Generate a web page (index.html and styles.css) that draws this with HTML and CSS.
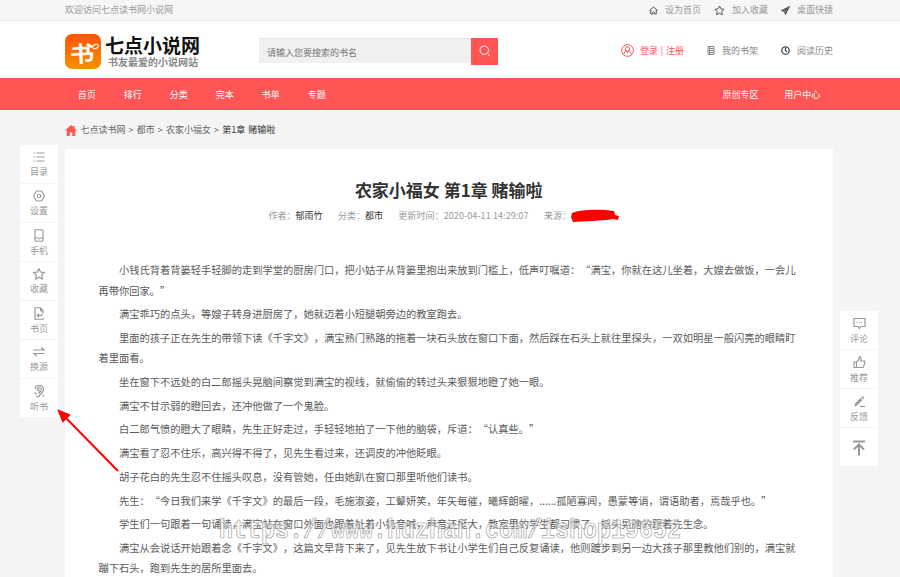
FILE: index.html
```html
<!DOCTYPE html>
<html lang="zh-CN">
<head>
<meta charset="UTF-8">
<title>农家小福女 第1章 赌输啦 - 七点读书网</title>
<link rel="stylesheet" href="styles.css">
</head>
<body>
<div class="topbar">
  <div class="wrap">
    <span>欢迎访问七点读书网小说网</span>
    <ul class="top-links">
      <li><svg width="9" height="9" viewBox="0 0 18 18"><path d="M1 9l8-7 8 7M3.500 8v8h4v-3a1.500 1.500 0 0 1 3 0v3h4V8"/></svg>设为首页</li>
      <li class="star"><svg width="11" height="11" viewBox="0 0 22 22"><path d="M11 2l2.900 5.700 6.100 1-4.400 4.400 1 6.400-5.600-2.900-5.600 2.900 1-6.400L2 8.700l6.100-1z"/></svg>加入收藏</li>
      <li class="send"><svg width="9" height="9" viewBox="0 0 18 18"><path d="M16 2L2 9l5 2 2 5zM7 11l9-9"/></svg>桌面快捷</li>
    </ul>
  </div>
</div>

<div class="header">
  <div class="wrap">
    <a class="logo">
      <span class="logo-mark"><b>书</b><i></i></span>
      <span class="logo-text"><strong>七点小说网</strong><em>书友最爱的小说网站</em></span>
    </a>
    <div class="search">
      <div class="search-input">请输入您要搜索的书名</div>
      <div class="search-btn"><svg width="12" height="12" viewBox="0 0 24 24"><circle cx="10.500" cy="10.500" r="8.500"/><path d="M17 17l5 5"/></svg></div>
    </div>
    <ul class="user-links">
      <li class="login"><svg width="13" height="13" viewBox="0 0 26 26"><circle cx="13" cy="13" r="11.800"/><circle cx="13" cy="10" r="4.500"/><path d="M5.500 21c.5-4 3-6 5-7l2.500 3 2.500-3c2 1 4.500 3 5 7"/></svg>登录 | 注册</li>
      <li class="shelf"><svg width="8" height="9" viewBox="0 0 16 18"><path d="M2 1h12v16H2zM5 1v16M5 5h9M5 9h9M5 13h9"/></svg>我的书架</li>
      <li class="history"><svg width="9" height="9" viewBox="0 0 18 18"><circle cx="9" cy="9" r="7.500"/><path d="M9 4v5l3 3"/></svg>阅读历史</li>
    </ul>
  </div>
</div>

<div class="nav">
  <div class="wrap">
    <ul class="nav-main">
      <li>首页</li><li>排行</li><li>分类</li><li>完本</li><li>书单</li><li>专题</li>
    </ul>
    <ul class="nav-user">
      <li>原创专区</li><li>用户中心</li>
    </ul>
  </div>
</div>

<div class="wrap crumbs">
  <svg width="12" height="11" viewBox="0 0 24 22"><path d="M12 0L0 11h3.500v11h6v-7h5v7h6V11H24L19 6.300V2h-3v1.700z"/></svg>
  <p>七点读书网 &gt; 都市 &gt; 农家小福女 &gt; <b>第1章 赌输啦</b></p>
</div>

<div class="wrap reader">
  <h1>农家小福女 第1章 赌输啦</h1>
  <div class="meta">
    <span>作者：<b>郁雨竹</b></span>
    <span>分类：<b>都市</b></span>
    <span class="date">更新时间：2020-04-11 14:29:07</span>
    <span>来源：<svg width="48" height="14" viewBox="0 0 48 14"><path d="M1 4C10 0 30 0 43 2l1 4 4 1-1 4-5-1C32 12 12 12 2 13L0 8z"/></svg></span>
  </div>
  <div class="content">
    <p>小钱氏背着背篓轻手轻脚的走到学堂的厨房门口，把小姑子从背篓里抱出来放到门槛上，低声叮嘱道：“满宝，你就在这儿坐着，大嫂去做饭，一会儿再带你回家。”</p>
    <p>满宝乖巧的点头，等嫂子转身进厨房了，她就迈着小短腿朝旁边的教室跑去。</p>
    <p>里面的孩子正在先生的带领下读《千字文》，满宝熟门熟路的拖着一块石头放在窗口下面，然后踩在石头上就往里探头，一双如明星一般闪亮的眼睛盯着里面看。</p>
    <p>坐在窗下不远处的白二郎摇头晃脑间察觉到满宝的视线，就偷偷的转过头来狠狠地瞪了她一眼。</p>
    <p>满宝不甘示弱的瞪回去，还冲他做了一个鬼脸。</p>
    <p>白二郎气愤的瞪大了眼睛，先生正好走过，手轻轻地拍了一下他的脑袋，斥道：“认真些。”</p>
    <p>满宝看了忍不住乐，高兴得不得了，见先生看过来，还调皮的冲他眨眼。</p>
    <p>胡子花白的先生忍不住摇头叹息，没有管她，任由她趴在窗口那里听他们读书。</p>
    <p>先生：“今日我们来学《千字文》的最后一段，毛施淑姿，工颦妍笑，年矢每催，曦辉朗曜，......孤陋寡闻，愚蒙等诮，谓语助者，焉哉乎也。”</p>
    <p>学生们一句跟着一句诵读，满宝站在窗口外面也跟着扯着小奶音喊，声音还挺大，教室里的学生都习惯了，摇头晃脑的跟着先生念。</p>
    <p>满宝从会说话开始跟着念《千字文》，这篇文早背下来了，见先生放下书让小学生们自己反复诵读，他则踱步到另一边大孩子那里教他们别的，满宝就蹦下石头，跑到先生的居所里面去。</p>
  </div>
</div>

<ul class="side side-left">
  <li><svg width="12" height="12" viewBox="0 0 24 24"><path d="M1 4h3M7 4h16M1 12h3M7 12h16M1 20h3M7 20h16"/></svg>目录</li>
  <li><svg width="12" height="12" viewBox="0 0 24 24"><path d="M7 2h10l6 10-6 10H7L1 12z"/><circle cx="12" cy="12" r="3.500"/></svg>设置</li>
  <li><svg width="12" height="13" viewBox="0 0 24 26"><rect x="4" y="1.500" width="16" height="23" rx="2"/><path d="M4 18h16M11 21.500h2"/></svg>手机</li>
  <li><svg width="12" height="12" viewBox="0 0 24 24"><path d="M12 1.500l3.300 6.600 7.200 1.100-5.100 5.300 1.200 7.500-6.600-3.500L5.400 22l1.200-7.500-5.100-5.300 7.200-1.100z"/></svg>收藏</li>
  <li><svg width="12" height="13" viewBox="0 0 24 26"><path d="M20 12V7l-5-5.500H4v23h16v-3M15 2v6h5M18 13v4H9M12 13.500L8.500 17l3.500 3.500"/></svg>书页</li>
  <li><svg width="12" height="12" viewBox="0 0 24 24"><path d="M1 8h21l-6-5M23 15H2l6 5"/></svg>换源</li>
  <li><svg width="12" height="13" viewBox="0 0 24 26"><path d="M4 8c1-9 17-9 17 1 0 7-7 8-8 12-1 4-6 4-6 0M8 9c1-5 9-4 9 0 0 4-5 5-6 8M8 12c3-4 5-2 4 1M3 15l4 3M19 19l3 4"/></svg>听书</li>
</ul>

<ul class="side side-right">
  <li><svg width="13" height="13" viewBox="0 0 26 26"><path d="M2 3h22v16h-8l-3 4-3-4H2zM7 11h2M12 11h2M17 11h2"/></svg>评论</li>
  <li><svg width="13" height="13" viewBox="0 0 26 26"><path d="M2 12h5v11H2zM7 12l5-5V2c4-1 5 3 3 8h8c1 4-1 10-3 13H7"/></svg>推荐</li>
  <li><svg width="13" height="13" viewBox="0 0 26 26"><path class="fill" d="M3 23l1-6L15 6l4 4L8 21zM16.500 4.500l2-2.500 4.500 4-2.500 2.500z"/><path d="M14 23h10"/></svg>反馈</li>
  <li class="to-top"><svg width="14" height="16" viewBox="0 0 28 32"><path d="M2 3h24M14 31V9M4 19L14 9l10 10"/></svg></li>
</ul>

<svg class="arrow" width="64" height="66" viewBox="0 0 64 66"><path d="M61 64L9 11"/><path class="head" d="M2 4l10 4-6 6z"/></svg>
<div class="watermark">https://www.huzhan.com/ishop19652</div>
</body>
</html>
```

FILE: styles.css
```css
* {
  box-sizing: border-box;
}
body {
  margin: 0;
  height: 577px;
  overflow: hidden;
  position: relative;
  background: #f4f4f4;
  color: #666;
  font: 9px/14px "Noto Sans CJK SC", sans-serif;
  text-spacing-trim: space-all;
}
ul, h1, p {
  margin: 0;
  padding: 0;
  list-style: none;
}
svg {
  display: block;
  flex: none;
  fill: none;
  stroke: currentColor;
  stroke-width: 2;
}
.wrap {
  width: 768px;
  margin-left: 65px;
}
.topbar {
  height: 21px;
  background: #f6f6f6;
  border-bottom: 1px solid #ececec;
  color: #999;
}
.topbar .wrap,
.header .wrap,
.nav .wrap {
  height: 100%;
  display: flex;
  align-items: center;
}
.topbar .wrap,
.nav .wrap {
  justify-content: space-between;
}
.top-links,
.user-links {
  display: flex;
}
.top-links li,
.user-links li {
  display: flex;
  align-items: center;
  gap: 7px;
}
.top-links svg {
  color: #555;
}
.top-links .star {
  margin-left: 13px;
  gap: 7px;
}
.top-links .send {
  margin-left: 13px;
}
.top-links .send svg {
  stroke-width: 2.500;
}

/* header */
.header {
  height: 57px;
  background: #fff;
}
.logo {
  display: flex;
  width: 194px;
  padding-top: 4px;
}
.logo-mark {
  position: relative;
  width: 36px;
  height: 35px;
  border-radius: 7px;
  background: linear-gradient(#ff5402, #f59000);
  color: #fff;
  text-align: center;
}
.logo-mark b {
  display: block;
  font-size: 22px;
  line-height: 37px;
  transform: translateX(-1px) rotate(-3deg) scaleX(1.1);
}
.logo-mark i {
  position: absolute;
  top: 10px;
  right: 2px;
  width: 7px;
  height: 5px;
  border: 1px solid #fff;
  border-radius: 50%;
  transform: rotate(-25deg);
}
.logo-text {
  margin-left: 4px;
}
.logo-text strong {
  display: block;
  color: #111;
  font-size: 19px;
  font-weight: bold;
  line-height: 21px;
}
.logo-text em {
  display: block;
  margin-left: 3px;
  color: #888;
  font-size: 10px;
  font-style: normal;
  font-weight: bold;
  line-height: 14px;
}
.search {
  display: flex;
  align-items: flex-start;
  padding-top: 4px;
}
.search-input {
  width: 212px;
  height: 25px;
  margin-bottom: 2px;
  padding-left: 8px;
  border-top: 1px solid #e6e6e6;
  background: #f0f0f0;
  color: #757575;
  line-height: 27px;
}
.search-btn {
  width: 27px;
  height: 27px;
  padding: 7px 0 0 8px;
  background: #ff5555;
  color: #fff;
}
.user-links {
  margin-left: auto;
  padding-top: 2px;
  color: #888;
}
.user-links .login {
  gap: 6px;
  color: #ff5555;
  word-spacing: 0.700px;
}
.user-links .shelf {
  margin-left: 23px;
}
.user-links .history {
  margin-left: 23px;
}
.history svg {
  color: #3a4458;
  stroke-width: 2.500;
}

/* nav */
.nav {
  height: 32px;
  background: #ff5555;
  color: #fff;
}
.nav ul {
  display: flex;
}
.nav-main {
  gap: 2.400px;
}
.nav li {
  padding: 2px 12.800px 0;
}

.crumbs {
  display: flex;
  align-items: center;
  height: 39px;
  padding-top: 1px;
}
.crumbs svg {
  margin-right: 3.500px;
  fill: #ff5555;
  stroke: none;
}
.crumbs p {
  word-spacing: 1.100px;
}
.crumbs b {
  color: #333;
  font-weight: normal;
}

/* chapter */
.reader {
  height: 428px;
  overflow: hidden;
  padding: 28px 34px 0 33.500px;
  background: #fff;
}
.reader h1 {
  color: #333;
  font-size: 17px;
  line-height: 26px;
  text-align: center;
}
.meta {
  display: flex;
  justify-content: center;
  gap: 15.300px;
  margin: 6px 10px 0 0;
  color: #999;
}
.meta b {
  color: #333;
  font-weight: normal;
}
.meta .date {
  letter-spacing: 0.090px;
}
.meta svg {
  display: inline-block;
  margin: 0 0 -4px;
  fill: #f00;
  stroke: none;
}
.content {
  margin-top: 37px;
  color: #5a5a5a;
  font-size: 10.250px;
  line-height: 20.500px;
}
.content p {
  margin-bottom: 3.200px;
  text-indent: 2em;
}

/* floating toolbars */
.side {
  position: absolute;
  width: 38px;
  background: #fff;
  color: #999;
}
.side svg {
  stroke-width: 2.400;
}
.side-left {
  top: 145px;
  left: 20px;
}
.side-right {
  top: 311px;
  left: 840px;
}
.side li {
  display: flex;
  flex-direction: column;
  align-items: center;
  gap: 2px;
  height: 39px;
  padding-top: 6px;
  border-bottom: 1px solid #f4f4f4;
}
.side .fill {
  fill: currentColor;
  stroke: none;
}
.side .to-top {
  padding-top: 12px;
}
.to-top svg {
  stroke-width: 4;
}

.arrow {
  position: absolute;
  top: 407px;
  left: 57px;
  color: #f00;
}
.arrow .head {
  fill: currentColor;
}
.watermark {
  position: absolute;
  top: 516px;
  left: 219px;
  color: rgba(255, 255, 255, 0.5);
  font: bold 23.330px/30px "Liberation Mono", monospace;
  transform: scaleY(1.200);
  -webkit-text-stroke: 0.600px #999;
}
```
